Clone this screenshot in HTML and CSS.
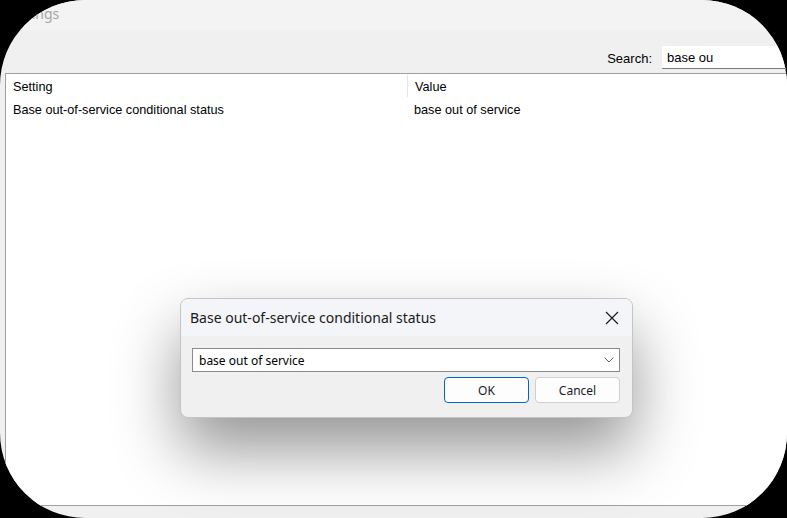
FILE: index.html
```html
<!DOCTYPE html>
<html lang="en">
<head>
    <meta charset="UTF-8">
    <meta name="viewport" content="width=device-width, initial-scale=1.0">
    <title>Settings</title>
    <link rel="stylesheet" href="styles.css">
</head>
<body>
    <div class="window">
        <div class="titlebar">Settings</div>
        <div class="toolbar">
            <label for="search">Search:</label>
            <input type="text" id="search" value="base ou">
        </div>
        <div class="list">
            <div class="row header">
                <div class="cell first">Setting</div>
                <div class="cell">Value</div>
            </div>
            <div class="row">
                <div class="cell first">Base out-of-service conditional status</div>
                <div class="cell">base out of service</div>
            </div>
        </div>
        <div class="statusbar"></div>

        <div class="dialog">
            <div class="dialog-title">
                <span>Base out-of-service conditional status</span>
                <svg class="close" width="14" height="14" viewBox="0 0 14 14">
                    <path d="M1 1 L13 13 M13 1 L1 13" stroke="#1a1a1a" stroke-width="1.2" fill="none"/>
                </svg>
            </div>
            <div class="dialog-body">
                <div class="combo">
                    <span>base out of service</span>
                    <svg width="10" height="6" viewBox="0 0 10 6">
                        <path d="M0.5 0.5 L5 5 L9.5 0.5" stroke="#606060" stroke-width="1" fill="none"/>
                    </svg>
                </div>
                <div class="buttons">
                    <button class="btn primary">OK</button>
                    <button class="btn">Cancel</button>
                </div>
            </div>
        </div>
    </div>
</body>
</html>
```

FILE: styles.css
```css
body {
    margin: 0;
    padding: 0;
    background-color: #000;
    font-family: "Liberation Sans", Arial, sans-serif;
}
.window {
    position: relative;
    width: 787px;
    height: 518px;
    border-radius: 85px;
    overflow: hidden;
    background-color: #f0f0f0;
    display: flex;
    flex-direction: column;
}
.titlebar {
    height: 30px;
    background-color: #f3f3f3;
    color: #a6a6a6;
    font-family: "Noto Sans", sans-serif;
    font-size: 14px;
    line-height: 27px;
    padding-left: 6px;
    box-sizing: border-box;
}
.toolbar {
    height: 43px;
    display: flex;
    justify-content: flex-end;
    align-items: flex-start;
    padding-top: 16px;
    box-sizing: border-box;
    font-size: 13px;
    color: #000;
}
.toolbar label {
    margin-top: 5px;
    margin-right: 10px;
}
.toolbar input {
    width: 140px;
    height: 23px;
    margin-right: -15px;
    border: none;
    border-bottom: 1px solid #7a7a7a;
    padding: 0 5px;
    font-family: "Liberation Sans", Arial, sans-serif;
    font-size: 13px;
    background: #fff;
    box-sizing: border-box;
    outline: none;
}
.list {
    flex: 1;
    margin-left: 5px;
    background-color: #fff;
    border-top: 1px solid #a0a0a0;
    border-left: 1px solid #a0a0a0;
    border-bottom: 1px solid #a0a0a0;
    font-size: 12.7px;
    padding-top: 1px;
}
.row {
    display: flex;
    height: 22px;
    align-items: center;
}
.cell {
    padding-left: 7px;
}
.cell.first {
    width: 394px;
}
.header .cell {
    height: 22px;
    line-height: 25px;
}
.header .cell.first {
    border-right: 1px solid #e5e5e5;
}
.row:not(.header) .cell {
    line-height: 22px;
    padding-top: 3px;
}
.statusbar {
    height: 12px;
}
.dialog {
    position: absolute;
    left: 180px;
    top: 298px;
    width: 453px;
    height: 120px;
    border: 1px solid #c4c4c4;
    border-radius: 8px;
    background-color: #f0f0f0;
    box-sizing: border-box;
    overflow: hidden;
    box-shadow: 0 32px 64px rgba(0, 0, 0, 0.42);
    font-family: "Noto Sans", sans-serif;
}
.dialog-title {
    height: 37px;
    background-color: #f3f5f9;
    display: flex;
    justify-content: space-between;
    align-items: center;
    padding: 0 13px 0 9px;
    font-size: 14px;
    color: #1a1a1a;
}
.dialog-body {
    padding: 12px 12px 0 11px;
}
.combo {
    height: 24px;
    border: 1px solid #8a8a8a;
    background: #fff;
    box-sizing: border-box;
    display: flex;
    justify-content: space-between;
    align-items: center;
    padding: 0 5px 0 6px;
    font-size: 12px;
    color: #000;
}
.buttons {
    display: flex;
    justify-content: flex-end;
    gap: 6px;
    margin-top: 5px;
}
.btn {
    width: 85px;
    height: 26px;
    border: 1px solid #d0d0d0;
    border-radius: 4px;
    background: #fdfdfd;
    font-family: "Noto Sans", sans-serif;
    font-size: 12px;
    color: #1a1a1a;
    padding: 0;
}
.btn.primary {
    border-color: #0067c0;
}
```
